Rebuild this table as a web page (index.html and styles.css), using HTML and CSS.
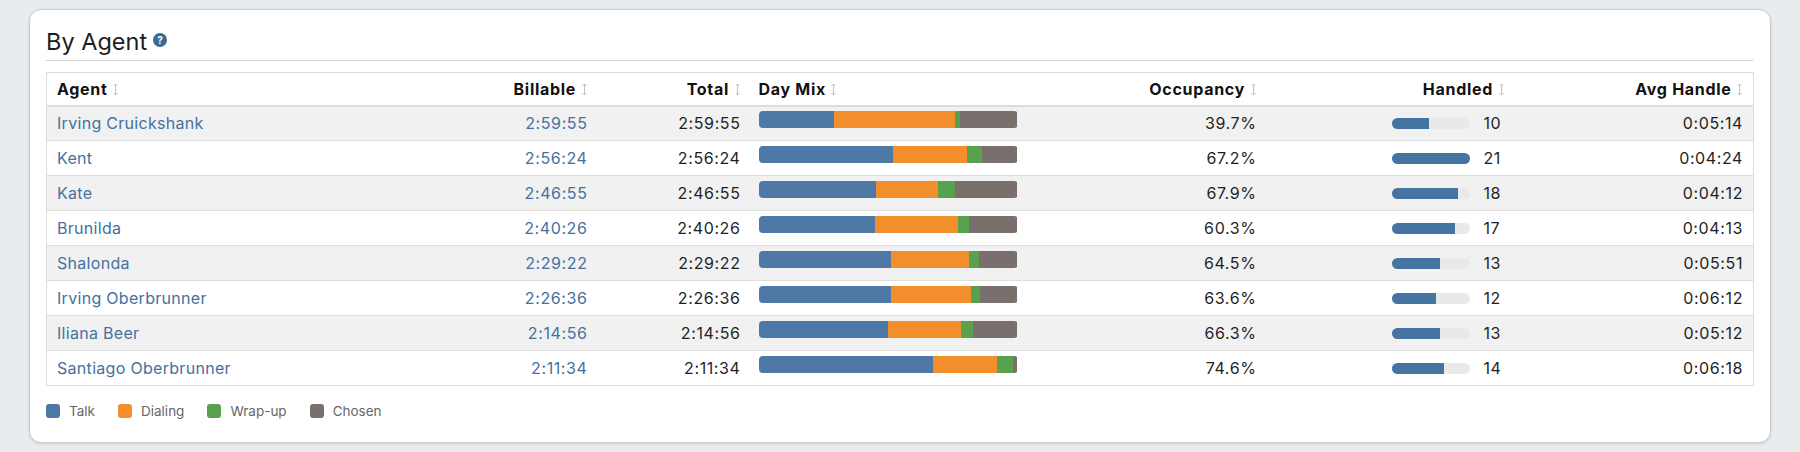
FILE: index.html
```html
<!DOCTYPE html>
<html lang="en">
<head>
<meta charset="utf-8">
<title>By Agent</title>
<link rel="stylesheet" href="styles.css">
</head>
<body>
<div class="page">
  <section class="card">
    <h2 class="title">By Agent <span class="help">?</span></h2>
    <table class="grid">
      <colgroup>
        <col class="c-agent"><col class="c-bill"><col class="c-total"><col class="c-mix"><col class="c-occ"><col class="c-hand"><col class="c-avg">
      </colgroup>
      <thead>
        <tr>
          <th class="l">Agent <svg class="sort" viewBox="0 0 7 13"><path d="M3.5 1v11M1.5 3l2-2 2 2M1.5 10l2 2 2-2"/></svg></th>
          <th class="r">Billable <svg class="sort" viewBox="0 0 7 13"><path d="M3.5 1v11M1.5 3l2-2 2 2M1.5 10l2 2 2-2"/></svg></th>
          <th class="r">Total <svg class="sort" viewBox="0 0 7 13"><path d="M3.5 1v11M1.5 3l2-2 2 2M1.5 10l2 2 2-2"/></svg></th>
          <th class="l mixcell">Day Mix <svg class="sort" viewBox="0 0 7 13"><path d="M3.5 1v11M1.5 3l2-2 2 2M1.5 10l2 2 2-2"/></svg></th>
          <th class="r">Occupancy <svg class="sort" viewBox="0 0 7 13"><path d="M3.5 1v11M1.5 3l2-2 2 2M1.5 10l2 2 2-2"/></svg></th>
          <th class="r">Handled <svg class="sort" viewBox="0 0 7 13"><path d="M3.5 1v11M1.5 3l2-2 2 2M1.5 10l2 2 2-2"/></svg></th>
          <th class="r">Avg Handle <svg class="sort" viewBox="0 0 7 13"><path d="M3.5 1v11M1.5 3l2-2 2 2M1.5 10l2 2 2-2"/></svg></th>
        </tr>
      </thead>
      <tbody>
        <tr>
          <td class="l"><a class="link name">Irving Cruickshank</a></td>
          <td class="r"><a class="link">2:59:55</a></td>
          <td class="r">2:59:55</td>
          <td class="mixcell"><div class="mix"><span class="talk" style="width:29%"></span><span class="dial" style="width:47%"></span><span class="wrap" style="width:1.7%"></span><span class="chosen" style="width:22.3%"></span></div></td>
          <td class="r">39.7%</td>
          <td class="r"><div class="hand"><div class="track"><div class="fill" style="width:47.6%"></div></div><span class="num">10</span></div></td>
          <td class="r">0:05:14</td>
        </tr>
        <tr>
          <td class="l"><a class="link name">Kent</a></td>
          <td class="r"><a class="link">2:56:24</a></td>
          <td class="r">2:56:24</td>
          <td class="mixcell"><div class="mix"><span class="talk" style="width:52%"></span><span class="dial" style="width:28.6%"></span><span class="wrap" style="width:5.8%"></span><span class="chosen" style="width:13.6%"></span></div></td>
          <td class="r">67.2%</td>
          <td class="r"><div class="hand"><div class="track"><div class="fill" style="width:100%"></div></div><span class="num">21</span></div></td>
          <td class="r">0:04:24</td>
        </tr>
        <tr>
          <td class="l"><a class="link name">Kate</a></td>
          <td class="r"><a class="link">2:46:55</a></td>
          <td class="r">2:46:55</td>
          <td class="mixcell"><div class="mix"><span class="talk" style="width:45.3%"></span><span class="dial" style="width:24.2%"></span><span class="wrap" style="width:6.4%"></span><span class="chosen" style="width:24.1%"></span></div></td>
          <td class="r">67.9%</td>
          <td class="r"><div class="hand"><div class="track"><div class="fill" style="width:85.7%"></div></div><span class="num">18</span></div></td>
          <td class="r">0:04:12</td>
        </tr>
        <tr>
          <td class="l"><a class="link name">Brunilda</a></td>
          <td class="r"><a class="link">2:40:26</a></td>
          <td class="r">2:40:26</td>
          <td class="mixcell"><div class="mix"><span class="talk" style="width:44.9%"></span><span class="dial" style="width:32.1%"></span><span class="wrap" style="width:4.4%"></span><span class="chosen" style="width:18.6%"></span></div></td>
          <td class="r">60.3%</td>
          <td class="r"><div class="hand"><div class="track"><div class="fill" style="width:81%"></div></div><span class="num">17</span></div></td>
          <td class="r">0:04:13</td>
        </tr>
        <tr>
          <td class="l"><a class="link name">Shalonda</a></td>
          <td class="r"><a class="link">2:29:22</a></td>
          <td class="r">2:29:22</td>
          <td class="mixcell"><div class="mix"><span class="talk" style="width:51.2%"></span><span class="dial" style="width:30.2%"></span><span class="wrap" style="width:3.9%"></span><span class="chosen" style="width:14.7%"></span></div></td>
          <td class="r">64.5%</td>
          <td class="r"><div class="hand"><div class="track"><div class="fill" style="width:61.9%"></div></div><span class="num">13</span></div></td>
          <td class="r">0:05:51</td>
        </tr>
        <tr>
          <td class="l"><a class="link name">Irving Oberbrunner</a></td>
          <td class="r"><a class="link">2:26:36</a></td>
          <td class="r">2:26:36</td>
          <td class="mixcell"><div class="mix"><span class="talk" style="width:51.2%"></span><span class="dial" style="width:30.8%"></span><span class="wrap" style="width:3.6%"></span><span class="chosen" style="width:14.4%"></span></div></td>
          <td class="r">63.6%</td>
          <td class="r"><div class="hand"><div class="track"><div class="fill" style="width:57.1%"></div></div><span class="num">12</span></div></td>
          <td class="r">0:06:12</td>
        </tr>
        <tr>
          <td class="l"><a class="link name">Iliana Beer</a></td>
          <td class="r"><a class="link">2:14:56</a></td>
          <td class="r">2:14:56</td>
          <td class="mixcell"><div class="mix"><span class="talk" style="width:50.1%"></span><span class="dial" style="width:28%"></span><span class="wrap" style="width:4.9%"></span><span class="chosen" style="width:17%"></span></div></td>
          <td class="r">66.3%</td>
          <td class="r"><div class="hand"><div class="track"><div class="fill" style="width:61.9%"></div></div><span class="num">13</span></div></td>
          <td class="r">0:05:12</td>
        </tr>
        <tr>
          <td class="l"><a class="link name">Santiago Oberbrunner</a></td>
          <td class="r"><a class="link">2:11:34</a></td>
          <td class="r">2:11:34</td>
          <td class="mixcell"><div class="mix"><span class="talk" style="width:67.2%"></span><span class="dial" style="width:24.8%"></span><span class="wrap" style="width:6.4%"></span><span class="chosen" style="width:1.6%"></span></div></td>
          <td class="r">74.6%</td>
          <td class="r"><div class="hand"><div class="track"><div class="fill" style="width:66.7%"></div></div><span class="num">14</span></div></td>
          <td class="r">0:06:18</td>
        </tr>
      </tbody>
    </table>
    <ul class="legend">
      <li><span class="sw talk"></span>Talk</li>
      <li><span class="sw dial"></span>Dialing</li>
      <li><span class="sw wrap"></span>Wrap-up</li>
      <li><span class="sw chosen"></span>Chosen</li>
    </ul>
  </section>
</div>
</body>
</html>
```

FILE: styles.css
```css
* { box-sizing: border-box; }
html, body { margin: 0; padding: 0; }
body {
  background: #e9ecef;
  font-family: Inter, "Liberation Sans", Arial, sans-serif;
  color: #1f1f1f;
}
.page {
  padding: 9px 29px;
}
.card {
  background: #fff;
  border: 1px solid #c9cbcd;
  border-radius: 12px;
  box-shadow: 0 1px 3px rgba(0,0,0,0.12);
  padding: 16px 17px 24px 16px;
  height: 434px;
}
.title {
  margin: 0;
  font-size: 23.5px;
  font-weight: 400;
  line-height: 32px;
  color: #1d1d1d;
  padding-bottom: 2px;
  border-bottom: 1px solid #cfd1d3;
  display: flex;
  align-items: center;
  gap: 6px;
}
.help {
  display: inline-flex;
  align-items: center;
  justify-content: center;
  width: 14px;
  height: 14px;
  border-radius: 50%;
  background: #3b6894;
  color: #fff;
  font-size: 10px;
  font-weight: 700;
  margin-top: -4px;
}
.grid {
  margin-top: 11px;
  width: 100%;
  table-layout: fixed;
  border-collapse: collapse;
  border: 1px solid #dcdcdc;
  font-size: 16px;
  letter-spacing: 0.6px;
}
.c-agent { width: 374px; }
.c-bill { width: 177px; }
.c-total { width: 153px; }
.c-mix { width: 290px; }
.c-occ { width: 226px; }
.c-hand { width: 248px; }
.c-avg { width: 239px; }
th {
  height: 33px;
  padding: 0 10px;
  font-size: 16px;
  font-weight: 700;
  letter-spacing: 0.7px;
  color: #111;
  background: #fff;
  border-bottom: 2px solid #dcdcdc;
  white-space: nowrap;
}
td {
  height: 35px;
  padding: 0 10px;
  border-top: 1px solid #dedede;
  white-space: nowrap;
  color: #1f1f1f;
  vertical-align: middle;
}
tbody tr:nth-child(odd) td { background: #f1f1f1; }
tbody tr:nth-child(even) td { background: #fff; }
.l { text-align: left; }
.r { text-align: right; }
th.mixcell, td.mixcell { padding-left: 8px; text-align: left; }
.sort {
  width: 7px;
  height: 13px;
  vertical-align: -1px;
  fill: none;
  stroke: #c2c2c2;
  stroke-width: 1;
}
.link {
  color: #44719f;
  text-decoration: none;
}
.name {
  letter-spacing: 0.3px;
}
.mix {
  display: flex;
  width: 259px;
  height: 17px;
  border-radius: 4px;
  overflow: hidden;
  margin-bottom: 7px;
}
.mix span { display: block; height: 100%; }
.talk { background: #4e79a7; }
.dial { background: #f28e2b; }
.wrap { background: #59a14f; }
.chosen { background: #79706e; }
.hand {
  display: flex;
  justify-content: flex-end;
  align-items: center;
}
.track {
  width: 78px;
  height: 11px;
  border-radius: 6px;
  background: #e9e9e9;
  overflow: hidden;
  margin-right: 14px;
}
.fill {
  height: 100%;
  background: #4574a3;
}
.num {
  width: 21px;
  text-align: left;
}
.legend {
  list-style: none;
  margin: 17px 0 0;
  padding: 0;
  display: flex;
  gap: 23px;
  font-size: 13.5px;
  color: #666;
}
.legend li {
  display: flex;
  align-items: center;
  gap: 9px;
}
.sw {
  display: block;
  width: 14px;
  height: 14px;
  border-radius: 3px;
}
```
